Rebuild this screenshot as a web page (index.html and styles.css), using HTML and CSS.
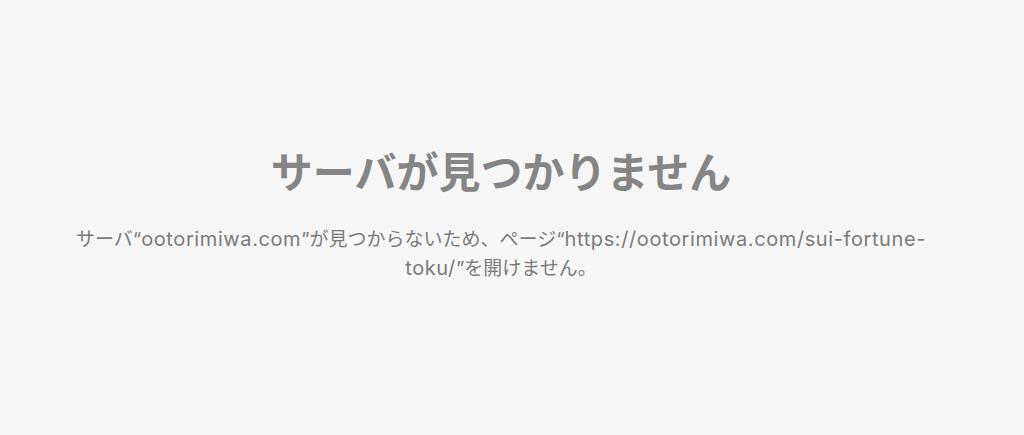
FILE: index.html
```html
<!DOCTYPE html>
<html lang="ja">
<head>
<meta charset="utf-8">
<title>サーバが見つかりません</title>
<link rel="stylesheet" href="styles.css">
</head>
<body>
<main class="page">
  <div class="error">
    <h1 class="title">サーバが見つかりません</h1>
    <p class="message">サーバ“<span class="latin">ootorimiwa.com</span>”が見つからないため、ページ“<span class="latin">https://ootorimiwa.com/sui-fortune-</span><span class="latin">toku/</span>”を開けません。</p>
  </div>
</main>
</body>
</html>
```
FILE: styles.css
```css
html, body {
  margin: 0;
  padding: 0;
  height: 100%;
  background: #f7f7f7;
}
body {
  font-family: "Inter", "Noto Sans CJK JP", sans-serif;
}
.page {
  display: flex;
  justify-content: center;
  padding-top: 137px;
  padding-right: 22px;
}
.error {
  width: 890px;
  text-align: center;
}
.title {
  margin: 0;
  font-family: "Noto Sans CJK JP", sans-serif;
  font-size: 42px;
  font-weight: 700;
  line-height: 66px;
  color: #858585;
}
.message {
  margin: 22px 0 0;
  font-size: 19px;
  line-height: 28px;
  color: #7b7b7b;
}
.latin {
  font-size: 20px;
  line-height: 28px;
  letter-spacing: 0.6px;
}
```
